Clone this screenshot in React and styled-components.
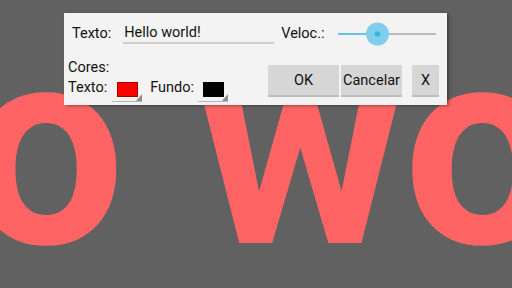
import React from "react";
import styled, { createGlobalStyle } from "styled-components";

const Global = createGlobalStyle`
  html, body { margin: 0; padding: 0; }
  body { font-family: Roboto, "Noto Sans", sans-serif; }
  #root { width: 512px; height: 288px; }
`;

const Stage = styled.div`
  position: relative;
  width: 512px;
  height: 288px;
  background: #616161;
  overflow: hidden;
`;

const Marquee = styled.div`
  margin-top: 7px;
  margin-left: -530px;
  font-family: Roboto, sans-serif;
  font-weight: 700;
  font-size: 280px;
  line-height: 280px;
  word-spacing: 3px;
  color: #ff6464;
  white-space: nowrap;
`;

const Dialog = styled.div`
  position: absolute;
  left: 64px;
  top: 13px;
  width: 383px;
  height: 92px;
  background: #f3f3f3;
  box-shadow: 2px 1px 3px rgba(0, 0, 0, 0.35);
  display: flex;
  flex-direction: column;
  font-family: Roboto, sans-serif;
  font-size: 14.5px;
  color: #111;
`;

const TopRow = styled.div`
  display: flex;
  align-items: center;
  height: 42px;
  padding-left: 8px;
`;

const Label = styled.span`
  line-height: 16px;
  white-space: nowrap;
  margin-right: ${(p) => p.$mr || 0}px;
`;

const TextInput = styled.input`
  box-sizing: border-box;
  width: 151px;
  height: 20px;
  margin: 0 7px 0 0;
  padding: 0 0 2px 1px;
  border: none;
  border-bottom: 2px solid #cfcfcf;
  background: transparent;
  font-family: Roboto, sans-serif;
  font-size: 14.5px;
  color: #111;
  outline: none;
`;

const SliderSvg = styled.svg`
  display: block;
  margin-left: 12px;
`;

const BottomRow = styled.div`
  display: flex;
  flex: 1;
  padding-left: 4px;
  padding-right: 8px;
`;

const Colors = styled.div`
  display: flex;
  flex-direction: column;
  padding-top: 5px;
  gap: 4px;
`;

const ColorRow = styled.div`
  display: flex;
  align-items: flex-start;
`;

const Swatch = styled.div`
  position: relative;
  box-sizing: border-box;
  width: 30px;
  height: 22px;
  margin: 0 8px 0 ${(p) => p.$ml || 0}px;
  padding: 2px 4px 0 5px;
  border-bottom: 1px solid #b8b8b8;
  &::after {
    content: "";
    position: absolute;
    right: 0;
    bottom: 0;
    width: 0;
    height: 0;
    border-left: 6px solid transparent;
    border-bottom: 7px solid #8e8e8e;
  }
`;

const ColorBox = styled.div`
  box-sizing: border-box;
  width: 21px;
  height: 15px;
  background: ${(p) => p.$color};
  border: 1px solid rgba(0, 0, 0, 0.35);
`;

const Spacer = styled.div`
  flex: 1;
`;

const Buttons = styled.div`
  display: flex;
  align-items: flex-start;
  padding-top: 10px;
`;

const Button = styled.button`
  box-sizing: border-box;
  width: ${(p) => p.$w}px;
  height: 32px;
  margin: 0 0 0 ${(p) => p.$ml || 0}px;
  padding: 0;
  border: none;
  border-bottom: 2px solid #bdbdbd;
  background: #d6d6d6;
  font-family: Roboto, sans-serif;
  font-size: 14.5px;
  color: #111;
`;

function Slider() {
  return (
    <SliderSvg width="100" height="26" viewBox="0 0 100 26">
      <line x1="1" y1="13" x2="40" y2="13" stroke="#33b5e5" strokeWidth="1.6" />
      <line x1="40" y1="13" x2="99" y2="13" stroke="#a9a9a9" strokeWidth="1.6" />
      <circle cx="40.5" cy="13" r="11.5" fill="#80cdec" />
      <circle cx="40.5" cy="13" r="2.8" fill="#33b5e5" />
    </SliderSvg>
  );
}

export default function App() {
  return (
    <>
      <Global />
      <Stage>
        <Marquee>Hello world!</Marquee>
        <Dialog>
          <TopRow>
            <Label $mr={12}>Texto:</Label>
            <TextInput readOnly value="Hello world!" />
            <Label>Veloc.:</Label>
            <Slider />
          </TopRow>
          <BottomRow>
            <Colors>
              <Label>Cores:</Label>
              <ColorRow>
                <Label>Texto:</Label>
                <Swatch $ml={5}>
                  <ColorBox $color="#ff0000" />
                </Swatch>
                <Label>Fundo:</Label>
                <Swatch $ml={4}>
                  <ColorBox $color="#000000" />
                </Swatch>
              </ColorRow>
            </Colors>
            <Spacer />
            <Buttons>
              <Button $w={71}>OK</Button>
              <Button $w={61} $ml={2}>Cancelar</Button>
              <Button $w={27} $ml={10}>X</Button>
            </Buttons>
          </BottomRow>
        </Dialog>
      </Stage>
    </>
  );
}
